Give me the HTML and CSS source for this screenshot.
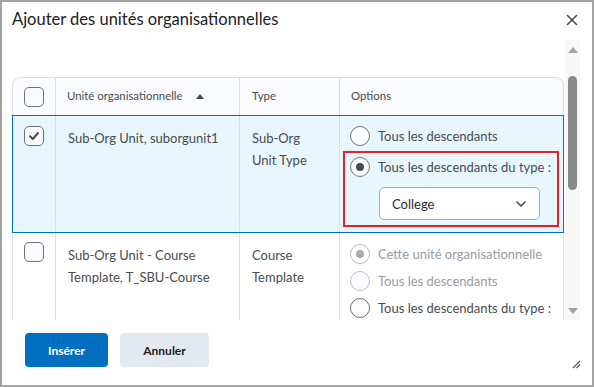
FILE: index.html
```html
<!DOCTYPE html>
<html lang="fr">
<head>
<meta charset="utf-8">
<link rel="stylesheet" href="styles.css">
</head>
<body>
<div class="dialog">
  <div class="dlg-head">
    <h1 class="title">Ajouter des unités organisationnelles</h1>
    <svg class="close" width="12" height="12" viewBox="0 0 12 12"><path d="M1.5 1.5l9 9M10.5 1.5l-9 9" stroke="#494c4e" stroke-width="1.6" stroke-linecap="round"/></svg>
  </div>
  <div class="dlg-body">
    <div class="scroll">
      <div class="table">
        <div class="row head">
          <div class="cell c1"><span class="cb"></span></div>
          <div class="cell c2">Unité organisationnelle <svg class="sort" width="8" height="5" viewBox="0 0 8 5"><path d="M0 5L4 0L8 5Z" fill="#494c4e"/></svg></div>
          <div class="cell c3">Type</div>
          <div class="cell c4">Options</div>
        </div>
        <div class="row sel">
          <div class="cell c1"><span class="cb checked"><svg width="12" height="10" viewBox="0 0 12 10"><path d="M2 5.2l2.8 2.8L10 2" fill="none" stroke="#494c4e" stroke-width="2" stroke-linecap="round" stroke-linejoin="round"/></svg></span></div>
          <div class="cell c2">Sub-Org Unit, suborgunit1</div>
          <div class="cell c3">Sub-Org<br>Unit Type</div>
          <div class="cell c4">
            <div class="opt first"><span class="radio"></span>Tous les descendants</div>
            <div class="hl">
              <div class="opt"><span class="radio on"></span>Tous les descendants du type :</div>
              <div class="select">College <svg width="10" height="6" viewBox="0 0 10 6"><path d="M1 1l4 4 4-4" fill="none" stroke="#494c4e" stroke-width="1.6" stroke-linecap="round" stroke-linejoin="round"/></svg></div>
            </div>
          </div>
        </div>
        <div class="row">
          <div class="cell c1"><span class="cb"></span></div>
          <div class="cell c2">Sub-Org Unit - Course<br>Template, T_SBU-Course</div>
          <div class="cell c3">Course<br>Template</div>
          <div class="cell c4 c4b">
            <div class="opt first dis"><span class="radio on dis"></span>Cette unité organisationnelle</div>
            <div class="opt dis"><span class="radio dis"></span>Tous les descendants</div>
            <div class="opt"><span class="radio"></span>Tous les descendants du type :</div>
          </div>
        </div>
      </div>
    </div>
    <div class="track">
      <svg class="arrow" width="10" height="6" viewBox="0 0 10 6"><path d="M0 6L5 0L10 6Z" fill="#a3a3a3"/></svg>
      <div class="thumb"></div>
      <div class="spacer"></div>
      <svg class="arrow" width="10" height="6" viewBox="0 0 10 6"><path d="M0 0L5 6L10 0Z" fill="#a3a3a3"/></svg>
    </div>
  </div>
  <div class="dlg-foot">
    <button class="btn primary">Insérer</button>
    <button class="btn">Annuler</button>
  </div>
  <svg class="grip" width="10" height="10" viewBox="0 0 10 10"><path d="M9 2L2 9M9 5.5L5.5 9" stroke="#555" stroke-width="1.2"/></svg>
</div>
</body>
</html>
```

FILE: styles.css
```css
* { box-sizing: border-box; }
html, body { margin: 0; padding: 0; }
body {
  width: 594px;
  height: 387px;
  font-family: Lato, "Noto Sans", sans-serif;
  color: #494c4e;
  background: #fff;
}
.dialog {
  position: relative;
  width: 594px;
  height: 387px;
  border: 2px solid #a3a3a3;
  background: #fff;
  display: flex;
  flex-direction: column;
}
.dlg-head {
  height: 38px;
  display: flex;
  align-items: flex-start;
  justify-content: space-between;
  padding: 7px 14px 0 10px;
}
.title {
  margin: 0;
  font-size: 16.5px;
  font-weight: 400;
  color: #202122;
  line-height: 20px;
}
.close { margin-top: 5px; }
.dlg-body {
  height: 280px;
  display: flex;
  padding-right: 12px;
}
.scroll {
  flex: 1;
  overflow: hidden;
  padding: 37px 0 0 10px;
}
.track {
  width: 15px;
  background: #f7f7f7;
  display: flex;
  flex-direction: column;
  align-items: center;
  padding: 7px 0 6px;
}
.thumb {
  margin-top: 23px;
  width: 9px;
  height: 114px;
  border-radius: 5px;
  background: #8a8a8a;
}
.spacer { flex: 1; }
.table {
  width: 552px;
}
.row {
  display: grid;
  grid-template-columns: 44px 184px 100px 224px;
}
.cell {
  border-right: 1px solid #d9dfe6;
  border-bottom: 1px solid #d9dfe6;
  font-size: 13px;
  line-height: 22px;
  padding: 11px 12px 0 12px;
}
.c1 {
  border-left: 1px solid #d9dfe6;
  padding: 9px 0 0 11px;
}
.c4 { padding: 6px 6px 0 10px; }
.c4b { padding-top: 7px; }
.row.head .cell {
  border-top: 1px solid #d9dfe6;
  background: #f9fbff;
  height: 39px;
  font-size: 11.4px;
  line-height: 16px;
  padding-top: 10px;
}
.row.head .c1 { border-top-left-radius: 8px; padding-top: 9px; }
.row.head .c4 { border-top-right-radius: 8px; padding-left: 11px; }
.row.head .c2 { padding-left: 11px; }
.sort { margin-left: 11px; vertical-align: 1px; }
.row.sel {
  position: relative;
  height: 117px;
}
.row.sel .cell { background: #e8f7fe; }
.row.sel::after {
  content: "";
  position: absolute;
  top: -1px; left: 0; right: 0; bottom: 0;
  border: 1px solid #006fbf;
  pointer-events: none;
}
.row:last-child { height: 100px; }
.cb {
  display: inline-flex;
  align-items: center;
  justify-content: center;
  width: 20px;
  height: 20px;
  border: 1px solid #6e7477;
  border-radius: 5px;
  background: #f9fbff;
}
.opt {
  display: flex;
  align-items: center;
  height: 27px;
  font-size: 13px;
  color: #494c4e;
  white-space: nowrap;
}
.opt.dis { color: #999c9e; }
.radio {
  width: 20px;
  height: 20px;
  border: 1px solid #6e7477;
  border-radius: 50%;
  background: #fcfdff;
  margin-right: 8px;
  flex: none;
  display: flex;
  align-items: center;
  justify-content: center;
}
.radio.dis { border-color: #b9bcbf; }
.radio.on::after {
  content: "";
  width: 8px;
  height: 8px;
  border-radius: 50%;
  background: #494c4e;
}
.radio.on.dis::after { background: #a8abad; }
.hl {
  margin: 2px 0 0 -7px;
  width: 216px;
  height: 76px;
  border: 2px solid #e0262b;
  padding: 0 0 0 5px;
}
.select {
  margin: 7px 0 0 29px;
  width: 161px;
  height: 33px;
  border: 1px solid #a8acaf;
  border-radius: 5px;
  background: #fff;
  display: flex;
  align-items: center;
  justify-content: space-between;
  padding: 0 13px 0 12px;
  font-size: 13px;
  color: #2a2c2e;
}
.dlg-foot {
  flex: 1;
  display: flex;
  gap: 12px;
  padding: 13px 0 0 23px;
}
.btn {
  height: 34px;
  border: none;
  border-radius: 4px;
  font-family: Lato, "Noto Sans", sans-serif;
  font-size: 12px;
  font-weight: 700;
  background: #e3e9f1;
  color: #202122;
  width: 89px;
}
.btn.primary {
  width: 83px;
  background: #006fbf;
  color: #fff;
}
.grip {
  position: absolute;
  right: 11px;
  bottom: 16px;
}
```
